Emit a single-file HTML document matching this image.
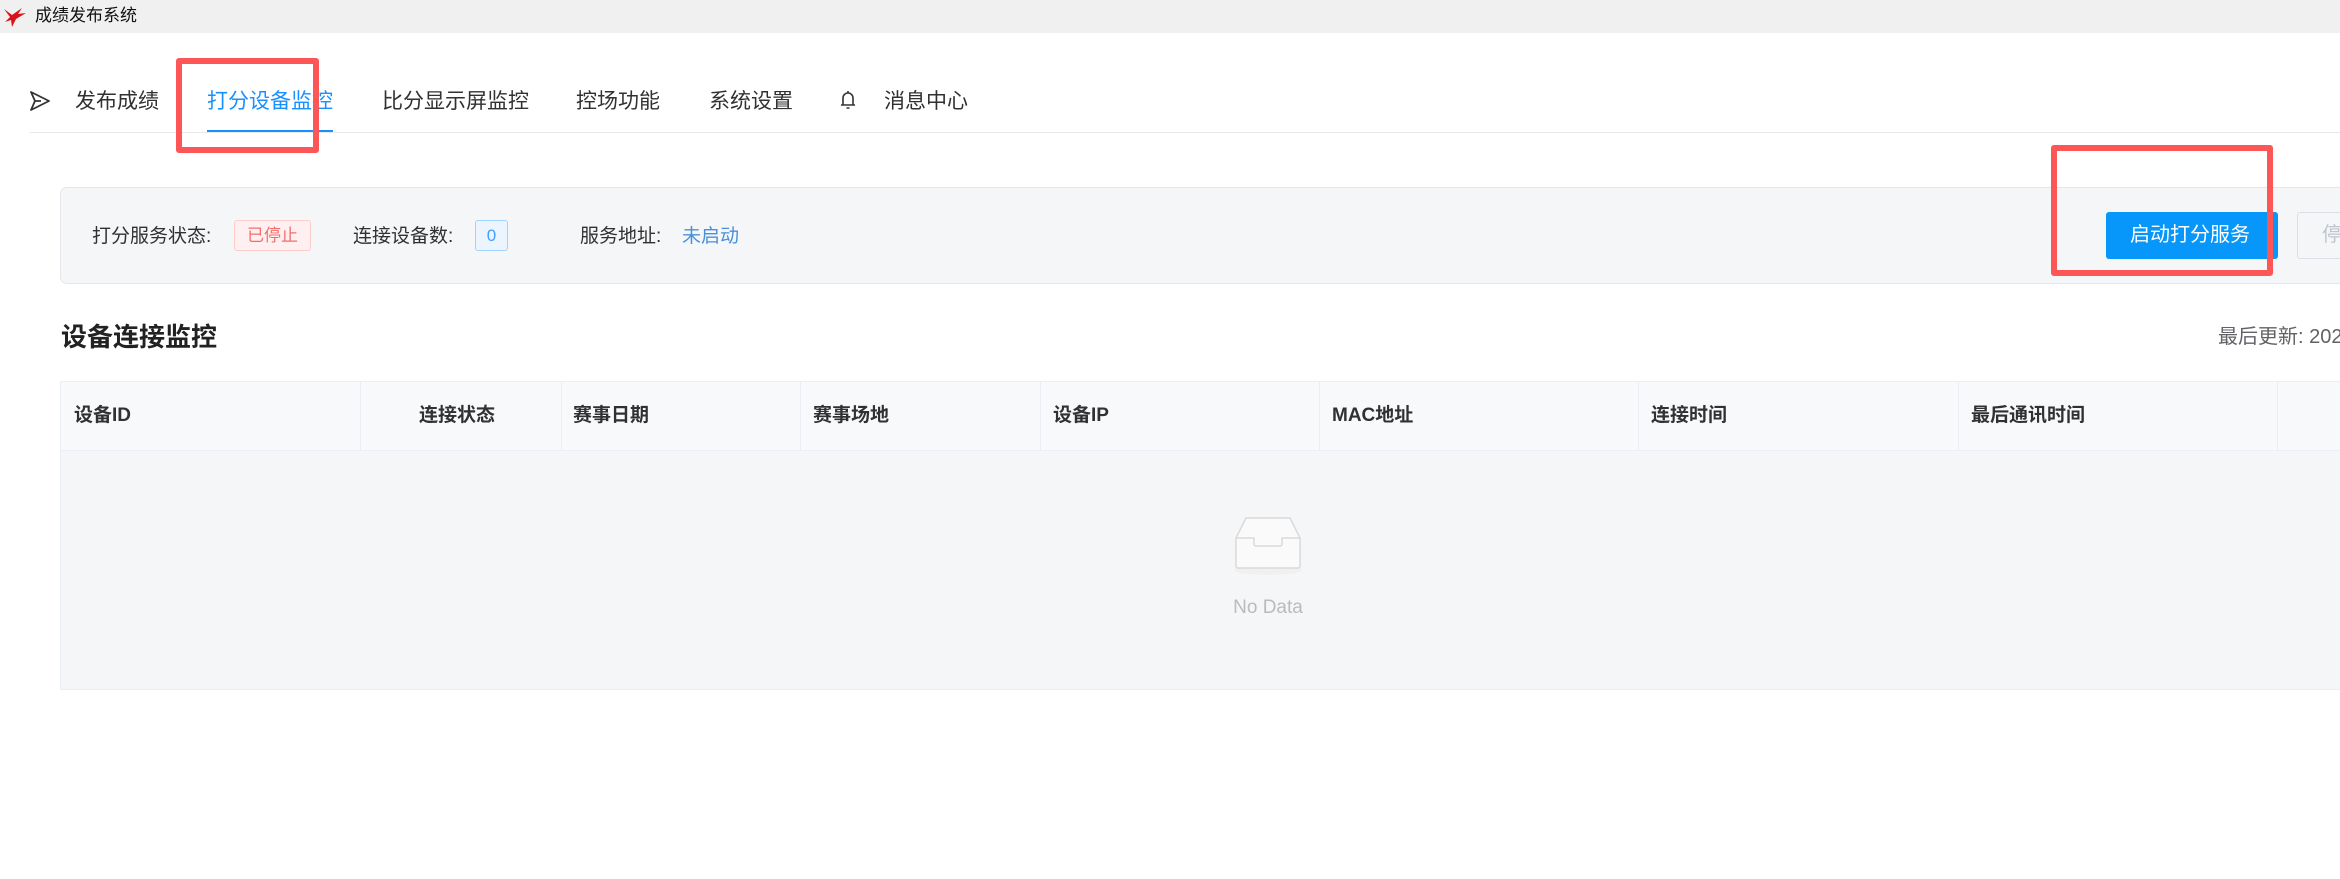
<!DOCTYPE html>
<html><head><meta charset="utf-8"><style>
*{margin:0;padding:0;box-sizing:border-box}
body{width:2340px;height:879px;overflow:hidden;background:#fff;position:relative;font-family:"Liberation Sans","Noto Sans CJK SC",sans-serif;color:#303133}
.a{position:absolute;white-space:nowrap}
.nav{font-size:21px;top:89px;line-height:26px;color:#303133}
.th{font-size:19px;font-weight:bold;top:403px;line-height:26px;color:#303133}
.vd{position:absolute;top:382px;width:1px;height:69px;background:#ebeef5}
</style></head><body>
<div class="a" style="left:0;top:0;width:2340px;height:33px;background:#f0f0f0"></div>
<svg class="a" style="left:2px;top:5px" width="26" height="24" viewBox="0 0 26 24"><path d="M2 4 L10 10 L20 3 L16 9 L24 8 L14 14 L10 22 L9 15 L3 17 L8 12 Z" fill="#d8141b"/></svg>
<div class="a" style="left:35px;top:5px;font-size:17px;line-height:22px;color:#111">成绩发布系统</div>

<svg class="a" style="left:29px;top:90px" width="22" height="22" viewBox="0 0 22 22"><path d="M2 2 L20 11 L2 20 L6 11 Z M6 11 L12 11" fill="none" stroke="#333" stroke-width="1.8" stroke-linejoin="round"/></svg>
<div class="a nav" style="left:75px">发布成绩</div>
<div class="a nav" style="left:207px;color:#1890ff">打分设备监控</div>
<div class="a" style="left:207px;top:130px;width:126px;height:3px;background:#1890ff"></div>
<div class="a" style="left:30px;top:132px;width:2310px;height:1px;background:#e8e8e8"></div>
<div class="a nav" style="left:382px">比分显示屏监控</div>
<div class="a nav" style="left:576px">控场功能</div>
<div class="a nav" style="left:709px">系统设置</div>
<svg class="a" style="left:839px;top:89px" width="18" height="22" viewBox="0 0 18 22"><path d="M4 16 V9 a5 5 0 0 1 10 0 V16 Z M2 16 H16 M7.5 19 h3 M9 2 v2" fill="none" stroke="#333" stroke-width="1.6"/></svg>
<div class="a nav" style="left:884px">消息中心</div>

<div class="a" style="left:60px;top:187px;width:2300px;height:97px;background:#f5f6f8;border:1px solid #e4e6ea;border-radius:7px"></div>
<div class="a" style="left:92px;top:224px;font-size:19px;line-height:26px">打分服务状态:</div>
<div class="a" style="left:234px;top:220px;width:77px;height:31px;background:#fef0f0;border:1px solid #fcc;border-radius:3px;color:#f56c6c;font-size:17px;line-height:29px;text-align:center">已停止</div>
<div class="a" style="left:353px;top:224px;font-size:19px;line-height:26px">连接设备数:</div>
<div class="a" style="left:475px;top:220px;width:33px;height:31px;background:#ecf5ff;border:1px solid #a0d4ff;border-radius:3px;color:#409eff;font-size:17px;line-height:29px;text-align:center">0</div>
<div class="a" style="left:580px;top:224px;font-size:19px;line-height:26px">服务地址:</div>
<div class="a" style="left:682px;top:224px;font-size:19px;line-height:26px;color:#4a90d9">未启动</div>
<div class="a" style="left:2106px;top:212px;width:172px;height:47px;background:#0796fa;border-radius:3px;color:#fff;font-size:20px;line-height:47px;padding-left:24px">启动打分服务</div>
<div class="a" style="left:2297px;top:212px;width:80px;height:47px;border:1px solid #dcdfe6;border-radius:3px;background:#f5f6f8;color:#c0c4cc;font-size:20px;line-height:45px;padding-left:24px">停</div>

<div class="a" style="left:61px;top:320px;font-size:26px;font-weight:bold;line-height:34px;color:#222">设备连接监控</div>
<div class="a" style="left:2218px;top:324px;font-size:20px;line-height:26px;color:#606266">最后更新: 2025</div>

<div class="a" style="left:60px;top:381px;width:2300px;height:309px;border:1px solid #ebeef5;background:#f5f6f8"></div>
<div class="a" style="left:61px;top:382px;width:2300px;height:69px;background:#f8f9fb;border-bottom:1px solid #ebeef5"></div>
<div class="vd" style="left:360px"></div><div class="vd" style="left:561px"></div><div class="vd" style="left:800px"></div><div class="vd" style="left:1040px"></div><div class="vd" style="left:1319px"></div><div class="vd" style="left:1638px"></div><div class="vd" style="left:1958px"></div><div class="vd" style="left:2277px"></div>
<div class="a th" style="left:74px">设备ID</div>
<div class="a th" style="left:419px">连接状态</div>
<div class="a th" style="left:573px">赛事日期</div>
<div class="a th" style="left:813px">赛事场地</div>
<div class="a th" style="left:1053px">设备IP</div>
<div class="a th" style="left:1332px">MAC地址</div>
<div class="a th" style="left:1651px">连接时间</div>
<div class="a th" style="left:1971px">最后通讯时间</div>
<svg class="a" style="left:1232px;top:516px" width="72" height="60" viewBox="0 0 72 60"><ellipse cx="36" cy="54" rx="34" ry="5" fill="#f0f0f0"/><path d="M4 22 L14 2 H58 L68 22 V50 a2 2 0 0 1 -2 2 H6 a2 2 0 0 1 -2 -2 Z" fill="#fafafa" stroke="#d9d9d9" stroke-width="1.5"/><path d="M4 22 H22 V28 a2 2 0 0 0 2 2 H48 a2 2 0 0 0 2 -2 V22 H68" fill="none" stroke="#d9d9d9" stroke-width="1.5"/></svg>
<div class="a" style="left:1230px;top:595px;width:76px;text-align:center;font-size:19px;line-height:26px;color:#bbb">No Data</div>

<div class="a" style="left:176px;top:58px;width:143px;height:95px;border:6px solid #fd5656;border-radius:3px"></div>
<div class="a" style="left:2051px;top:145px;width:222px;height:131px;border:6px solid #fd5656;border-radius:3px"></div>
</body></html>
